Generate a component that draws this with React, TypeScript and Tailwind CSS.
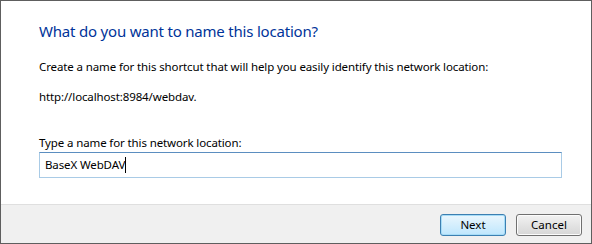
import React from 'react';

const font = { fontFamily: '"Noto Sans", "Open Sans", sans-serif' };

const App: React.FC = () => {
  return (
    <div
      className="w-[592px] h-[244px] border border-[#5e5e5e] bg-white flex flex-col text-black"
      style={font}
    >
      <div className="flex-1 pl-[38px] pr-[30px] text-[11.5px] leading-[16px] tracking-[-0.12px]">
        <h1 className="mt-[19px] text-[15px] leading-[22px] tracking-[-0.2px] text-[#003399]">
          What do you want to name this location?
        </h1>
        <p className="mt-[17px]">
          Create a name for this shortcut that will help you easily identify this network location:
        </p>
        <p className="mt-[14px]">http://localhost:8984/webdav.</p>
        <label className="block mt-[30px]">Type a name for this network location:</label>
        <div className="mt-[1px] w-[523px] h-[26px] border border-[#a9cbe6] border-t-[#5b8ec0] flex items-center pl-[5px]">
          <span>BaseX WebDAV</span>
          <span className="w-px h-[16px] bg-black" />
        </div>
      </div>
      <div className="h-[39px] border-t border-[#dfdfdf] bg-[#f0f0f0] flex items-start justify-end gap-[10px] pr-[9px] pt-[9px] text-[11.5px]">
        <button className="w-[66px] h-[22px] rounded-[3px] border border-[#3c7fb1] bg-gradient-to-b from-[#eaf6fd] to-[#bee6fd] shadow-[inset_0_0_0_1px_#a6dcf7]">
          Next
        </button>
        <button className="w-[66px] h-[22px] rounded-[3px] border border-[#707070] bg-gradient-to-b from-[#f2f2f2] to-[#d6d6d6] shadow-[inset_0_0_0_1px_#fcfcfc]">
          Cancel
        </button>
      </div>
    </div>
  );
};

export default App;
